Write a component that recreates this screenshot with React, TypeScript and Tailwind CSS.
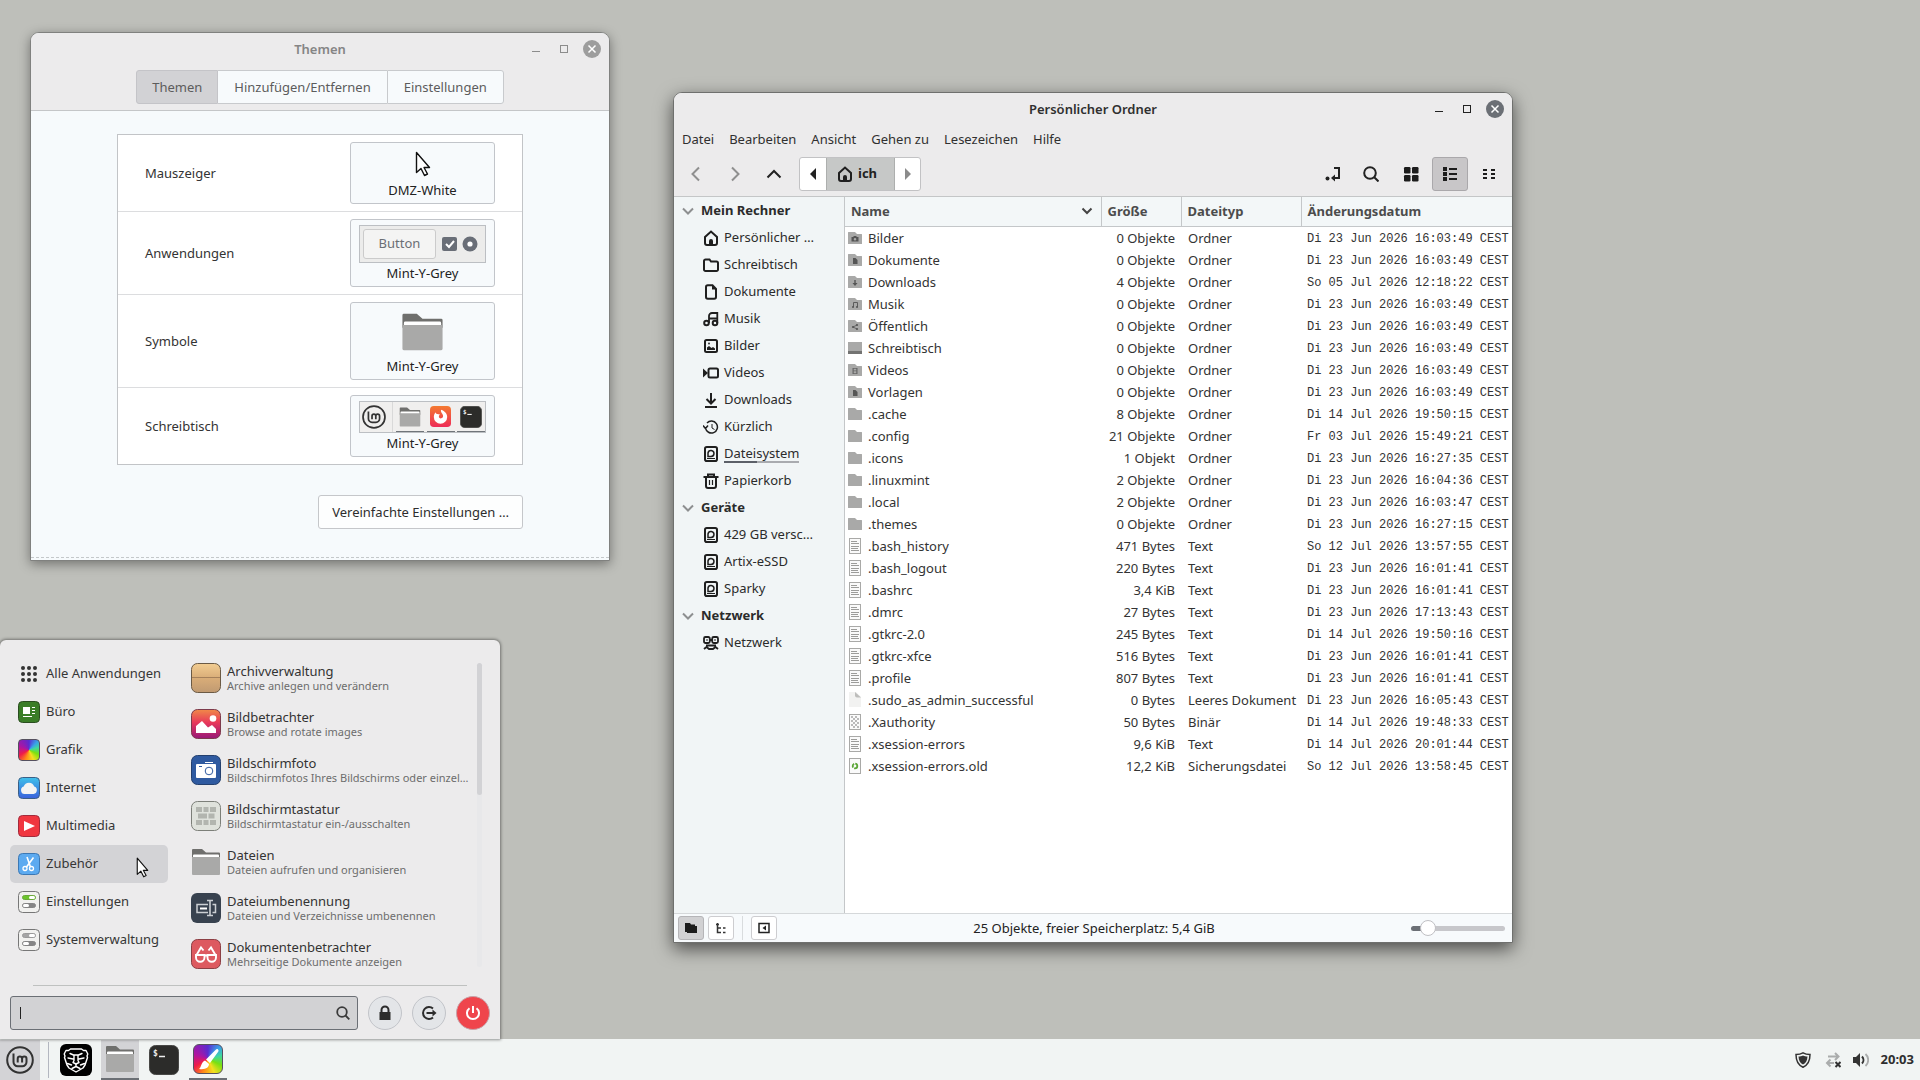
import type { ReactNode } from "react";

type IconProps = { className?: string };

interface FileEntry {
  name: string;
  icon: string;
  size: string;
  type: string;
  date: string;
}

const folderDate = "Di 23 Jun 2026 16:03:49 CEST";

const files: FileEntry[] = [
  { name: "Bilder", icon: "camera", size: "0 Objekte", type: "Ordner", date: folderDate },
  { name: "Dokumente", icon: "doc", size: "0 Objekte", type: "Ordner", date: folderDate },
  { name: "Downloads", icon: "down", size: "4 Objekte", type: "Ordner", date: "So 05 Jul 2026 12:18:22 CEST" },
  { name: "Musik", icon: "music", size: "0 Objekte", type: "Ordner", date: folderDate },
  { name: "Öffentlich", icon: "share", size: "0 Objekte", type: "Ordner", date: folderDate },
  { name: "Schreibtisch", icon: "desktop", size: "0 Objekte", type: "Ordner", date: folderDate },
  { name: "Videos", icon: "film", size: "0 Objekte", type: "Ordner", date: folderDate },
  { name: "Vorlagen", icon: "doc", size: "0 Objekte", type: "Ordner", date: folderDate },
  { name: ".cache", icon: "folder", size: "8 Objekte", type: "Ordner", date: "Di 14 Jul 2026 19:50:15 CEST" },
  { name: ".config", icon: "folder", size: "21 Objekte", type: "Ordner", date: "Fr 03 Jul 2026 15:49:21 CEST" },
  { name: ".icons", icon: "folder", size: "1 Objekt", type: "Ordner", date: "Di 23 Jun 2026 16:27:35 CEST" },
  { name: ".linuxmint", icon: "folder", size: "2 Objekte", type: "Ordner", date: "Di 23 Jun 2026 16:04:36 CEST" },
  { name: ".local", icon: "folder", size: "2 Objekte", type: "Ordner", date: "Di 23 Jun 2026 16:03:47 CEST" },
  { name: ".themes", icon: "folder", size: "0 Objekte", type: "Ordner", date: "Di 23 Jun 2026 16:27:15 CEST" },
  { name: ".bash_history", icon: "text", size: "471 Bytes", type: "Text", date: "So 12 Jul 2026 13:57:55 CEST" },
  { name: ".bash_logout", icon: "text", size: "220 Bytes", type: "Text", date: "Di 23 Jun 2026 16:01:41 CEST" },
  { name: ".bashrc", icon: "text", size: "3,4 KiB", type: "Text", date: "Di 23 Jun 2026 16:01:41 CEST" },
  { name: ".dmrc", icon: "text", size: "27 Bytes", type: "Text", date: "Di 23 Jun 2026 17:13:43 CEST" },
  { name: ".gtkrc-2.0", icon: "text", size: "245 Bytes", type: "Text", date: "Di 14 Jul 2026 19:50:16 CEST" },
  { name: ".gtkrc-xfce", icon: "text", size: "516 Bytes", type: "Text", date: "Di 23 Jun 2026 16:01:41 CEST" },
  { name: ".profile", icon: "text", size: "807 Bytes", type: "Text", date: "Di 23 Jun 2026 16:01:41 CEST" },
  { name: ".sudo_as_admin_successful", icon: "empty", size: "0 Bytes", type: "Leeres Dokument", date: "Di 23 Jun 2026 16:05:43 CEST" },
  { name: ".Xauthority", icon: "binary", size: "50 Bytes", type: "Binär", date: "Di 14 Jul 2026 19:48:33 CEST" },
  { name: ".xsession-errors", icon: "text", size: "9,6 KiB", type: "Text", date: "Di 14 Jul 2026 20:01:44 CEST" },
  { name: ".xsession-errors.old", icon: "backup", size: "12,2 KiB", type: "Sicherungsdatei", date: "So 12 Jul 2026 13:58:45 CEST" },
];

const places = [
  {
    title: "Mein Rechner",
    items: [
      { label: "Persönlicher …", icon: "home" },
      { label: "Schreibtisch", icon: "folder" },
      { label: "Dokumente", icon: "document" },
      { label: "Musik", icon: "music" },
      { label: "Bilder", icon: "image" },
      { label: "Videos", icon: "video" },
      { label: "Downloads", icon: "download" },
      { label: "Kürzlich", icon: "recent" },
      { label: "Dateisystem", icon: "disk", usage: true },
      { label: "Papierkorb", icon: "trash" },
    ],
  },
  {
    title: "Geräte",
    items: [
      { label: "429 GB versc…", icon: "disk" },
      { label: "Artix-eSSD", icon: "disk" },
      { label: "Sparky", icon: "disk" },
    ],
  },
  { title: "Netzwerk", items: [{ label: "Netzwerk", icon: "network" }] },
];

const categories = [
  { label: "Alle Anwendungen", icon: <GridDots /> },
  { label: "Büro", icon: <OfficeIcon /> },
  { label: "Grafik", icon: <RainbowTile className="size-[22px] rounded-[4px]" /> },
  { label: "Internet", icon: <CloudIcon /> },
  { label: "Multimedia", icon: <PlayIcon /> },
  { label: "Zubehör", icon: <ScissorsIcon />, active: true },
  { label: "Einstellungen", icon: <TogglesIcon green /> },
  { label: "Systemverwaltung", icon: <TogglesIcon /> },
];

const apps = [
  { name: "Archivverwaltung", info: "Archive anlegen und verändern", icon: <ArchiveIcon /> },
  { name: "Bildbetrachter", info: "Browse and rotate images", icon: <ViewerIcon /> },
  { name: "Bildschirmfoto", info: "Bildschirmfotos Ihres Bildschirms oder einzel…", icon: <CameraIcon /> },
  { name: "Bildschirmtastatur", info: "Bildschirmtastatur ein-/ausschalten", icon: <KeyboardIcon /> },
  { name: "Dateien", info: "Dateien aufrufen und organisieren", icon: <BigFolder className="size-[30px]" /> },
  { name: "Dateiumbenennung", info: "Dateien und Verzeichnisse umbenennen", icon: <RenameIcon /> },
  { name: "Dokumentenbetrachter", info: "Mehrseitige Dokumente anzeigen", icon: <GlassesIcon /> },
];

/* ---------- icons ---------- */

function GridDots() {
  return (
    <svg viewBox="0 0 22 22" className="size-[22px] shrink-0" fill="#333">
      {[5, 11, 17].map((y) => [5, 11, 17].map((x) => <circle key={`${x}-${y}`} cx={x} cy={y} r="2" />))}
    </svg>
  );
}

function OfficeIcon() {
  return (
    <svg viewBox="0 0 22 22" className="size-[22px]">
      <rect x=".5" y=".5" width="21" height="21" rx="4" fill="#3a7d27" stroke="#2a4d20" />
      <path d="M5 6h7v7H5zM14 6h3v1h-3zM14 9h3v1h-3zM14 12h3v1h-3zM5 15h9v1H5z" fill="#fff" />
    </svg>
  );
}

function RainbowTile({ className, children }: IconProps & { children?: ReactNode }) {
  return (
    <span
      className={`block border border-[#55505f] bg-[conic-gradient(from_0deg,#5a2bd0,#3aa0e8_45deg,#3fd8a0_75deg,#7be010_115deg,#f4e020_155deg,#ff8a18_200deg,#f01c48_240deg,#b014a0_290deg,#5a2bd0)] ${className}`}
    >
      {children}
    </span>
  );
}

function CloudIcon() {
  return (
    <svg viewBox="0 0 22 22" className="size-[22px]">
      <defs>
        <linearGradient id="sky" x2="0" y2="1">
          <stop stopColor="#3fc0ea" />
          <stop offset="1" stopColor="#3a62dc" />
        </linearGradient>
      </defs>
      <rect x=".5" y=".5" width="21" height="21" rx="4" fill="url(#sky)" stroke="#3b5f86" />
      <path d="M6.500 17a3.800 3.800 0 0 1-.8-7.400A5.500 5.500 0 0 1 16.200 9.600 3.800 3.800 0 0 1 15.500 17z" fill="#f3f3f3" />
    </svg>
  );
}

function PlayIcon() {
  return (
    <svg viewBox="0 0 22 22" className="size-[22px]">
      <rect x=".5" y=".5" width="21" height="21" rx="4" fill="#f03640" stroke="#a12b3c" />
      <path d="M6 6l11 5-11 5z" fill="#fff" />
    </svg>
  );
}

function ScissorsIcon() {
  return (
    <svg viewBox="0 0 22 22" className="size-[22px]">
      <rect x=".5" y=".5" width="21" height="21" rx="4" fill="#5caaf0" stroke="#3c78b4" />
      <path d="M9 4l3.500 10M15.500 4.500L8.500 14" stroke="#fff" strokeWidth="1.600" fill="none" />
      <circle cx="7" cy="15.500" r="2" fill="none" stroke="#fff" strokeWidth="1.300" />
      <circle cx="13.500" cy="15.500" r="2" fill="none" stroke="#fff" strokeWidth="1.300" />
    </svg>
  );
}

function TogglesIcon({ green }: { green?: boolean }) {
  return (
    <svg viewBox="0 0 22 22" className="size-[22px]">
      <rect x=".5" y=".5" width="21" height="21" rx="4" fill="#f1f1ef" stroke="#777" />
      <rect x="4.500" y="4.500" width="13" height="4" rx="2" fill={green ? "#6cc52c" : "#a5a5a5"} stroke={green ? "#6aa93a" : "#9a9a9a"} />
      <rect x="11" y="5" width="6" height="3" rx="1.500" fill="#fff" />
      <rect x="4.500" y="12.500" width="13" height="4" rx="2" fill="#858585" stroke="#858585" />
      <rect x="5" y="13" width="6" height="3" rx="1.500" fill="#fff" />
    </svg>
  );
}

function ArchiveIcon() {
  return (
    <svg viewBox="0 0 30 30" className="size-[30px]">
      <defs>
        <linearGradient id="box" x2="0" y2="1">
          <stop stopColor="#f2cd92" />
          <stop offset=".5" stopColor="#d9ad78" />
          <stop offset="1" stopColor="#c09a72" />
        </linearGradient>
      </defs>
      <rect x=".5" y=".5" width="29" height="29" rx="6" fill="url(#box)" stroke="#6b5a45" />
      <path d="M1 14.500h28" stroke="#a5805a" />
    </svg>
  );
}

function ViewerIcon() {
  return (
    <svg viewBox="0 0 30 30" className="size-[30px]">
      <defs>
        <linearGradient id="sunset" x2="0" y2="1">
          <stop stopColor="#f08a48" />
          <stop offset=".45" stopColor="#e8385a" />
          <stop offset="1" stopColor="#981878" />
        </linearGradient>
      </defs>
      <rect x=".5" y=".5" width="29" height="29" rx="6" fill="url(#sunset)" stroke="#7d3b4c" />
      <circle cx="22" cy="9.500" r="3.300" fill="#fff" />
      <path d="M5 24v-7l6-5 6 6.500 4-2.500 4 4v4z" fill="#fff" />
    </svg>
  );
}

function CameraIcon() {
  return (
    <svg viewBox="0 0 30 30" className="size-[30px]">
      <rect x=".5" y=".5" width="29" height="29" rx="6" fill="#2f5aa0" stroke="#24406e" />
      <path d="M14 7h8v1h-8zM6 9h18a1 1 0 0 1 1 1v12a1 1 0 0 1-1 1H6a1 1 0 0 1-1-1V10a1 1 0 0 1 1-1z" fill="#fff" />
      <path d="M8 11.500h3" stroke="#2f5aa0" />
      <circle cx="18" cy="16" r="3.800" fill="#fff" stroke="#2f5aa0" />
    </svg>
  );
}

function KeyboardIcon() {
  return (
    <svg viewBox="0 0 30 30" className="size-[30px]">
      <rect x=".5" y=".5" width="29" height="29" rx="6" fill="#dfe2dc" stroke="#7c7f79" />
      <path
        d="M5 6h6v5H5zM12.500 6h5v5h-5zM19 6h6v5h-6zM7 12.500h9v5H7zM17.500 12.500h6v5h-6zM5 19h6v5H5zM12.500 19h5v5h-5zM19 19h6v5h-6z"
        fill="#b2b5af"
      />
    </svg>
  );
}

function BigFolder({ className }: IconProps) {
  return (
    <svg viewBox="0 0 30 30" preserveAspectRatio="none" className={className}>
      <path d="M1 3a1 1 0 0 1 1-1h9l4 3.500h13a1 1 0 0 1 1 1V12H1z" fill="#6f6f6d" />
      <path d="M3 7.500h24a1 1 0 0 1 1 1V12H2V8.500a1 1 0 0 1 1-1z" fill="#fff" />
      <path d="M1 10h28v17a1 1 0 0 1-1 1H2a1 1 0 0 1-1-1z" fill="#a9a9a8" />
    </svg>
  );
}

function RenameIcon() {
  return (
    <svg viewBox="0 0 30 30" className="size-[30px]">
      <rect width="30" height="30" rx="6" fill="#38424f" />
      <path d="M17 11.500H6v8h11M21.500 11.500h3v8h-3" stroke="#ccd0d4" strokeWidth="1.500" fill="none" />
      <path d="M16 7.500h6M16 22.500h6M19 8v14" stroke="#ccd0d4" strokeWidth="1.600" />
      <path d="M9 14.500h7v2H9z" fill="#fff" />
    </svg>
  );
}

function GlassesIcon() {
  return (
    <svg viewBox="0 0 30 30" className="size-[30px]">
      <rect x=".5" y=".5" width="29" height="29" rx="6" fill="#dd5a60" stroke="#8c3f44" />
      <g fill="none" stroke="#fff" strokeWidth="1.900">
        <path d="M5.500 16L10 8.500l2.500 3M24.500 16L20 8.500l-2.500 3M13.500 16.500h3" />
        <path d="M5 16h8.500v2.500a4.200 4.200 0 0 1-8.500 0zM16.500 16H25v2.500a4.200 4.200 0 0 1-8.500 0z" />
      </g>
    </svg>
  );
}

function MintLogo({ className }: IconProps) {
  return (
    <svg viewBox="0 0 28 28" className={className} fill="none" stroke="#333" strokeWidth="2">
      <circle cx="14" cy="14" r="12.800" />
      <path d="M7.500 7.500v8.500a4.200 4.200 0 0 0 4.200 4.200h4.600a4.200 4.200 0 0 0 4.200-4.200v-3.200a2.200 2.200 0 0 0-4.400 0V16.500v-3.700a2.200 2.200 0 0 0-4.400 0V16.500" />
    </svg>
  );
}

function TerminalIcon({ className }: IconProps) {
  return (
    <svg viewBox="0 0 30 30" className={className}>
      <rect x=".5" y=".5" width="29" height="29" rx="6" fill="#2c2c2a" stroke="#484846" />
      <text x="4" y="11" fontFamily="'DejaVu Sans Mono', monospace" fontSize="8" fontWeight="bold" fill="#eee">
        $
      </text>
      <path d="M10 11.500h6" stroke="#eee" strokeWidth="1.500" />
    </svg>
  );
}

function FirefoxIcon() {
  return (
    <svg viewBox="0 0 22 22" className="size-[21px]">
      <defs>
        <linearGradient id="fox" x2="0" y2="1">
          <stop stopColor="#f47a30" />
          <stop offset="1" stopColor="#ee2c58" />
        </linearGradient>
      </defs>
      <rect width="22" height="22" rx="4" fill="url(#fox)" />
      <path
        d="M6 6.500c0 1 .5 1.600 1.500 1.800L10.500 9c-1.300 1-1.500 2.200-.8 3.200 1.400 1.600 4 .6 4-1.600C13.700 8 11 7.500 11.500 4c4.500 1.500 6.500 4.500 6.500 7.500a7 7 0 0 1-14 0c0-2 .8-3.800 2-5z"
        fill="#fff"
      />
    </svg>
  );
}

function BraveIcon() {
  return (
    <svg viewBox="0 0 32 32" className="size-8">
      <rect width="32" height="32" rx="6" fill="#000" />
      <g fill="none" stroke="#fff" strokeWidth="1.400" strokeLinejoin="round" strokeLinecap="round">
        <path d="M10.500 5h11l2 1.500h2.500l1.800 3.500-.8 2 .5 1.500-2.500 7.500-2 3L16 28l-7-4-2-3-2.500-7.500L5 12l-.8-2L6 6.500h2.500z" />
        <path d="M10 9.500l3.500 1.500h5L22 9.500M8 14l5 1M24 14l-5 1M14 11v5.500l-1 2 3 1.500 3-1.500-1-2V11" />
        <path d="M16 20v2.500M12 24.500l4-2 4 2M7.500 19.500l4 1.500M24.500 19.500l-4 1.500" />
      </g>
    </svg>
  );
}

function Pointer({ className }: IconProps) {
  return (
    <svg viewBox="0 0 16 26" className={className}>
      <path d="M1.500 1.500v20l4.500-4 3.500 7 3-1.500L9 16.500h5.500z" fill="#fff" stroke="#111" strokeWidth="1.400" strokeLinejoin="round" />
    </svg>
  );
}

function PlaceIcon({ name }: { name: string }) {
  const shapes: Record<string, ReactNode> = {
    home: (
      <>
        <path d="M2 7L8 1.500 14 7v6a2 2 0 0 1-2 2H4a2 2 0 0 1-2-2z" />
        <path d="M6 15v-4a2 2 0 0 1 4 0v4z" fill="#1f1f1f" stroke="none" />
      </>
    ),
    folder: <path d="M1 4a1.500 1.500 0 0 1 1.500-1.500h4L8 4.500h5.500A1.500 1.500 0 0 1 15 6v6.500a1.500 1.500 0 0 1-1.500 1.500h-11A1.500 1.500 0 0 1 1 12.500z" />,
    document: (
      <>
        <path d="M3 3a1.800 1.800 0 0 1 1.800-1.800H9.500L13 5v8a1.800 1.800 0 0 1-1.800 1.800H4.800A1.800 1.800 0 0 1 3 13z" />
        <path d="M9 1v4.500h4.500z" fill="#1f1f1f" stroke="none" />
      </>
    ),
    music: (
      <>
        <circle cx="3.500" cy="12" r="2.300" />
        <circle cx="12" cy="12" r="2.300" />
        <path d="M6 12V5a3 3 0 0 1 3-3h5.300v10M6 7.500h8" strokeWidth="1.800" />
      </>
    ),
    image: (
      <>
        <rect x="2" y="2" width="12" height="12" rx="1.500" />
        <path d="M4 12V9.500l2-1.500 2.500 2 1.500-1 2 1.500V12z" fill="#1f1f1f" stroke="none" />
        <circle cx="6" cy="5.500" r=".9" fill="#1f1f1f" stroke="none" />
      </>
    ),
    video: (
      <>
        <rect x="5.500" y="3.500" width="9.500" height="9" rx="1.500" />
        <path d="M0 3.500L5 8l-5 4.500z" fill="#1f1f1f" stroke="none" />
      </>
    ),
    download: <path d="M8 1v10M3.500 7L8 11.500 12.500 7M2 15h12" />,
    recent: (
      <g strokeWidth="1.500">
        <path d="M2.500 9A6 6 0 1 0 4 4M0 6.500L2.500 9.500 5 6.500" />
        <path d="M9 5v4l2.500 1.500" strokeWidth="1" />
      </g>
    ),
    disk: (
      <>
        <rect x="2" y="1" width="12" height="14" rx="1.800" />
        <path d="M5 10.500V7a3 3 0 1 1 3 3.500z" strokeWidth="1.500" />
        <path d="M4 12.500h8" strokeWidth="1" />
      </>
    ),
    trash: (
      <>
        <path d="M3 4.500V13a2 2 0 0 0 2 2h6a2 2 0 0 0 2-2V4.500M.5 4h15M5 4V1.500h6V4" />
        <path d="M6.500 7v5M9.500 7v5" strokeWidth="1.200" />
      </>
    ),
    network: (
      <g strokeWidth="1.800">
        <rect x="1" y="2" width="5.800" height="6" rx="1.500" />
        <rect x="9.200" y="2" width="5.800" height="6" rx="1.500" />
        <path d="M6.500 5h3M3.500 5h1M11.500 5h1M3 10.500h10M1 14l2.500-2 2.500 2h4l2.500-2 2.500 2" />
      </g>
    ),
  };
  return (
    <svg viewBox="0 0 16 16" className="size-4 shrink-0" fill="none" stroke="#1f1f1f" strokeWidth="2">
      {shapes[name]}
    </svg>
  );
}

function FileIcon({ name }: { name: string }) {
  if (name === "text" || name === "binary" || name === "backup" || name === "empty") {
    return (
      <svg viewBox="0 0 14 16" className="h-4 w-3.5 shrink-0" fill="none">
        {name === "empty" ? (
          <>
            <path d="M1 0h7l5 5v10H1z" fill="#f2f2f1" />
            <path d="M7 0l6 5.500H9a2 2 0 0 1-2-2z" fill="#bdbdbb" />
          </>
        ) : (
          <rect x="1.500" y=".5" width="11" height="15" fill="#fafafa" stroke="#a9a9a7" />
        )}
        {name === "text" && <path d="M3 3.500h6M3 5.500h8M3 8.500h8M3 10.500h7M3 12.500h8" stroke="#9c9c9a" />}
        {name === "binary" && (
          <path d="M3 3h8M3 7h8M3 11h8M5 5h6M5 9h6M5 13h6" stroke="#bababa" strokeWidth="2" strokeDasharray="2 2" />
        )}
        {name === "backup" && <circle cx="7" cy="8" r="2.300" stroke="#5ba637" strokeWidth="1.800" strokeDasharray="4 1" />}
      </svg>
    );
  }
  return (
    <svg viewBox="0 0 14 14" className="size-3.5 shrink-0">
      {name === "desktop" ? (
        <>
          <path d="M0 1h14v9H0z" fill="#a9a9a8" />
          <path d="M0 10h14v3H0z" fill="#737372" />
        </>
      ) : (
        <path d="M0 1.500A.5.5 0 0 1 .5 1H7l2 2h4.500a.5.5 0 0 1 .5.500V12.500a.5.5 0 0 1-.5.500H.5a.5.5 0 0 1-.5-.500z" fill="#a9a9a8" />
      )}
      <g fill="#555">
        {name === "camera" && (
          <path d="M3.500 6h1.500l1-1h2l1 1h1.500v4.500h-7zM7 7a1.300 1.300 0 1 0 0 2.600A1.300 1.300 0 0 0 7 7z" fillRule="evenodd" />
        )}
        {name === "doc" && <path d="M5 5h2.500L9.500 7v4H5z" />}
        {name === "down" && <path d="M6.300 5h1.400v3H9.500L7 11 4.500 8h1.800z" />}
        {name === "music" && (
          <>
            <path d="M5.500 10V5.500h4V10" fill="none" stroke="#555" strokeWidth=".9" />
            <circle cx="5" cy="10" r="1" />
            <circle cx="9" cy="10" r="1" />
          </>
        )}
        {name === "share" && (
          <>
            <circle cx="5" cy="8" r="1.100" />
            <circle cx="9" cy="6" r="1.100" />
            <circle cx="9" cy="10" r="1.100" />
            <path d="M9 6L5 8l4 2" fill="none" stroke="#555" strokeWidth=".8" />
          </>
        )}
        {name === "film" && <path d="M4.500 5h1.200v6H4.500zM8.300 5h1.200v6H8.300zM5 5h4v.8H5zM5 7.500h4v.8H5zM5 10.200h4v.8H5z" opacity=".8" />}
      </g>
    </svg>
  );
}

/* ---------- windows ---------- */

function WindowTitle({ title, active }: { title: string; active?: boolean }) {
  const tone = active ? "#222" : "#8c8c8c";
  return (
    <div className="grid h-8 grid-cols-[1fr_auto_1fr] items-center">
      <span />
      <h2 className={`pt-0.5 text-[13px] font-semibold ${active ? "text-[#303030]" : "text-[#858585]"}`}>{title}</h2>
      <div className="flex items-center justify-end gap-2.5 pr-2">
        <button aria-label="Minimieren" className="size-[18px]">
          <svg viewBox="0 0 18 18" stroke={tone}>
            <path d="M5 11.500h8" />
          </svg>
        </button>
        <button aria-label="Maximieren" className="size-[18px]">
          <svg viewBox="0 0 18 18" stroke={tone} fill="none">
            <rect x="5.500" y="5.500" width="7" height="7" />
          </svg>
        </button>
        <button aria-label="Schließen" className="size-[18px]">
          <svg viewBox="0 0 18 18">
            <circle cx="9" cy="9" r="9" fill={active ? "#6b6f75" : "#9d9d9d"} />
            <path d="M5.500 5.500l7 7M12.500 5.500l-7 7" stroke="#fff" strokeWidth="1.500" />
          </svg>
        </button>
      </div>
    </div>
  );
}

function ThemeRow({ label, value, children }: { label: string; value: string; children: ReactNode }) {
  return (
    <div className="flex items-center justify-between px-[27px] py-[7px]">
      <span className="pt-0.5 text-[13px] text-[#333]">{label}</span>
      <button
        aria-label={`${label}: ${value}`}
        className="flex w-[145px] flex-col items-center rounded-[3px] border border-[#c2c5ca] bg-[#f7fafc] pt-[5px] pb-[3px]"
      >
        {children}
        <span className="text-[13px] leading-5 text-[#222]">{value}</span>
      </button>
    </div>
  );
}

function ThemesWindow() {
  return (
    <section className="absolute top-8 left-[30px] w-[580px] overflow-hidden rounded-t-[9px] border border-[#80817f] bg-[#f6fafc] shadow-[0_3px_12px_rgba(0,0,0,0.4)]">
      <header className="border-b border-[#c4c6c8] bg-[#ecebec] pb-1.5">
        <WindowTitle title="Themen" />
        <div role="tablist" className="mt-[5px] flex justify-center text-[13px] text-[#5c5c5c]">
          <button role="tab" aria-selected="true" className="h-[34px] rounded-l-[3px] border border-[#c4c4c8] bg-[#d2d2d5] px-[15px] pt-0.5">
            Themen
          </button>
          <button role="tab" aria-selected="false" className="h-[34px] border-y border-[#c8cacd] bg-[#f7fafc] px-4 pt-0.5">
            Hinzufügen/Entfernen
          </button>
          <button role="tab" aria-selected="false" className="h-[34px] rounded-r-[3px] border border-[#c8cacd] bg-[#f7fafc] px-4 pt-0.5">
            Einstellungen
          </button>
        </div>
      </header>
      <div className="mx-[86px] mt-[23px] divide-y divide-[#dcdddf] border border-[#c2c4c7] bg-white">
        <ThemeRow label="Mauszeiger" value="DMZ-White">
          <Pointer className="my-[3px] h-[26px] w-4" />
        </ThemeRow>
        <ThemeRow label="Anwendungen" value="Mint-Y-Grey">
          <span className="flex h-[38px] w-[127px] items-center border border-[#bcbfc3] bg-[#ececeb] pl-[3px]">
            <span className="mr-1.5 flex h-[30px] w-[73px] items-center justify-center rounded-[3px] border border-[#cbcbcb] bg-[#f4f4f3] text-[13px] text-[#6b6f75]">
              Button
            </span>
            <svg viewBox="0 0 36 16" className="h-4 w-9">
              <rect x="0" y="1" width="15" height="14" rx="2" fill="#696e77" />
              <path d="M4 8l3 3 5-6" stroke="#fff" strokeWidth="2" fill="none" />
              <circle cx="28" cy="8" r="7.500" fill="#696e77" />
              <circle cx="28" cy="8" r="2.600" fill="#fff" />
            </svg>
          </span>
        </ThemeRow>
        <ThemeRow label="Symbole" value="Mint-Y-Grey">
          <BigFolder className="my-[3px] h-[42px] w-[43px]" />
        </ThemeRow>
        <ThemeRow label="Schreibtisch" value="Mint-Y-Grey">
          <span className="flex h-8 w-[127px] items-center border border-[#bcbfc3] bg-[#f0efee] pl-0.5">
            <MintLogo className="size-6" />
            <span className="mr-[3px] ml-1.5 h-full w-px bg-[#d9d9d9]" />
            <span className="flex h-full flex-1 justify-between">
              <span className="flex h-full w-7 items-center justify-center border-b border-[#70757a]">
                <BigFolder className="size-[22px]" />
              </span>
              <span className="flex h-full w-7 items-center justify-center border-b border-[#70757a]">
                <FirefoxIcon />
              </span>
              <span className="flex h-full w-7 items-center justify-center border-b border-[#70757a]">
                <TerminalIcon className="size-[22px]" />
              </span>
            </span>
          </span>
        </ThemeRow>
      </div>
      <div className="mx-[86px] mt-[30px] mb-7 flex justify-end">
        <button className="h-[34px] rounded-[3px] border border-[#c5c7ca] bg-[#fdfefe] px-[13px] pt-0.5 text-[13px] text-[#2d2d2d]">
          Vereinfachte Einstellungen …
        </button>
      </div>
      <div className="mb-0.5 border-t border-dashed border-[#c4c8ca]" />
    </section>
  );
}

function Toolbar() {
  return (
    <div className="flex h-[43px] items-start px-[3px] pt-1">
      <button aria-label="Zurück" className="flex h-[34px] w-[38px] items-center justify-center">
        <svg viewBox="0 0 16 16" className="size-4" fill="none" stroke="#8f8f8f" strokeWidth="2">
          <path d="M11 1.500L4.500 8l6.500 6.500" />
        </svg>
      </button>
      <button aria-label="Vorwärts" className="ml-px flex h-[34px] w-[38px] items-center justify-center">
        <svg viewBox="0 0 16 16" className="size-4" fill="none" stroke="#8f8f8f" strokeWidth="2">
          <path d="M5 1.500L11.500 8 5 14.500" />
        </svg>
      </button>
      <button aria-label="Übergeordneter Ordner" className="ml-px flex h-[34px] w-[38px] items-center justify-center">
        <svg viewBox="0 0 16 16" className="size-4" fill="none" stroke="#222" strokeWidth="2">
          <path d="M1.500 11.500L8 5l6.500 6.500" />
        </svg>
      </button>
      <div className="ml-1.5 flex h-[34px] overflow-hidden rounded-[3px] border border-[#c2c2c4] bg-white">
        <button aria-label="Pfad nach links" className="flex w-[26px] items-center justify-center">
          <svg viewBox="0 0 8 12" className="h-3 w-2" fill="#222">
            <path d="M7 0v12L1 6z" />
          </svg>
        </button>
        <button className="flex w-[69px] items-center gap-[5px] border-x border-[#adafae] bg-[#c6c8c7] pl-2.5 text-[13px] font-bold text-[#222]">
          <PlaceIcon name="home" />
          ich
        </button>
        <button aria-label="Pfad nach rechts" className="flex w-[25px] items-center justify-center">
          <svg viewBox="0 0 8 12" className="h-3 w-2" fill="#8b8b8b">
            <path d="M1 0v12l6-6z" />
          </svg>
        </button>
      </div>
      <div className="ml-auto flex gap-0.5 pr-px">
        <button aria-label="Ort eingeben" className="flex h-[34px] w-9 items-center justify-center">
          <svg viewBox="0 0 16 16" className="size-4" fill="none" stroke="#222" strokeWidth="2">
            <path d="M9 2h5v10H8" />
            <circle cx="2.500" cy="12.500" r="2" fill="#222" stroke="none" />
            <path d="M10 8.500L6 12l4 3.500z" fill="#222" stroke="none" />
          </svg>
        </button>
        <button aria-label="Suchen" className="flex h-[34px] w-9 items-center justify-center">
          <svg viewBox="0 0 16 16" className="size-4" fill="none" stroke="#222" strokeWidth="2">
            <circle cx="7" cy="7" r="5.800" />
            <path d="M11 11l4.500 4.500" />
          </svg>
        </button>
        <button aria-label="Symbolansicht" className="flex h-[34px] w-[39px] items-center justify-center">
          <svg viewBox="0 0 16 16" className="size-4" fill="#1c1c1c">
            <rect x="1" y="1" width="6.500" height="6.500" rx="1.200" />
            <rect x="9" y="1" width="6.500" height="6.500" rx="1.200" />
            <rect x="1" y="9" width="6.500" height="6.500" rx="1.200" />
            <rect x="9" y="9" width="6.500" height="6.500" rx="1.200" />
          </svg>
        </button>
        <button
          aria-label="Listenansicht"
          aria-pressed="true"
          className="flex h-[34px] w-9 items-center justify-center rounded-[3px] border border-[#aaa8ab] bg-[#c8c6c8]"
        >
          <svg viewBox="0 0 16 16" className="size-4" fill="#1c1c1c">
            <path d="M1 1h4v4H1zM1 6h4v4H1zM1 11h4v4H1zM7 2h8v2H7zM7 7h8v2H7zM7 12h8v2H7z" />
          </svg>
        </button>
        <button aria-label="Kompaktansicht" className="flex h-[34px] w-[38px] items-center justify-center">
          <svg viewBox="0 0 16 16" className="size-4" fill="#1c1c1c">
            <path d="M2 3h4v2H2zM10 3h4v2h-4zM2 7h4v2H2zM10 7h4v2h-4zM2 11h4v2H2zM10 11h4v2h-4z" />
          </svg>
        </button>
      </div>
    </div>
  );
}

function Sidebar() {
  return (
    <nav className="w-[170px] shrink-0 bg-[#f1f5f6] text-[13px] text-[#2b2b2b]">
      {places.map((group) => (
        <div key={group.title}>
          <button className="flex h-[27px] w-full items-center gap-[7px] pl-2 font-bold">
            <svg viewBox="0 0 12 12" className="size-3" fill="none" stroke="#8d8f90" strokeWidth="2">
              <path d="M1 3.500L6 8.500l5-5" />
            </svg>
            {group.title}
          </button>
          {group.items.map((item) => (
            <a key={item.label} href="#" className="flex h-[27px] items-center gap-[5px] pl-[29px] whitespace-nowrap">
              <PlaceIcon name={item.icon} />
              {"usage" in item ? (
                <span className="border-b-2 border-[#9a9ca0] leading-4 [border-image:linear-gradient(to_right,#5c6068_44%,#a9abaf_44%)_1]">
                  {item.label}
                </span>
              ) : (
                item.label
              )}
            </a>
          ))}
        </div>
      ))}
    </nav>
  );
}

function FileTable() {
  return (
    <table className="w-full table-fixed border-collapse text-left text-[13px] whitespace-nowrap text-[#333]">
      <colgroup>
        <col />
        <col className="w-20" />
        <col className="w-[120px]" />
        <col className="w-[211px]" />
      </colgroup>
      <thead>
        <tr className="h-[29px] border-b border-[#c4c7c9] bg-[#f3f7f8] text-[#4c4c4c]">
          <th className="p-0 pl-1.5">
            <span className="flex items-center justify-between pr-2">
              Name
              <svg viewBox="0 0 12 12" className="size-3" fill="none" stroke="#444" strokeWidth="2">
                <path d="M1.500 3.500L6 8l4.500-4.500" />
              </svg>
            </span>
          </th>
          <th className="border-l border-[#c4c7c9] p-0 pl-1.5">Größe</th>
          <th className="border-l border-[#c4c7c9] p-0 pl-1.5">Dateityp</th>
          <th className="border-l border-[#c4c7c9] p-0 pl-1.5">Änderungsdatum</th>
        </tr>
      </thead>
      <tbody>
        {files.map((file) => (
          <tr key={file.name} className="h-[22px]">
            <td className="p-0 pl-[3px]">
              <span className="flex items-center gap-1.5 leading-5">
                <FileIcon name={file.icon} />
                {file.name}
              </span>
            </td>
            <td className="p-0 pr-1.5 text-right leading-5">{file.size}</td>
            <td className="p-0 pl-[7px] leading-5">{file.type}</td>
            <td className="p-0 pt-0.5 pl-1.5 font-['Liberation_Mono','DejaVu_Sans_Mono',monospace] text-[12px] leading-5">{file.date}</td>
          </tr>
        ))}
      </tbody>
    </table>
  );
}

function StatusBar() {
  return (
    <footer className="flex h-[29px] items-center border-t border-[#d5d8da] bg-[#f7fafc] px-1 text-[13px] text-[#222]">
      <button aria-label="Orte anzeigen" className="flex h-6 w-[26px] items-center justify-center rounded-[3px] border border-[#b5b5b8] bg-[#d1d1d3]">
        <svg viewBox="0 0 12 12" className="size-3" fill="#1c1c1c">
          <path d="M0 1h5l1 1.500h4V4H2.500v6H0z" />
          <path d="M2 4h10v7H2z" />
        </svg>
      </button>
      <button aria-label="Baumansicht" className="ml-1 flex h-6 w-[26px] items-center justify-center rounded-[3px] border border-[#cdcdd0] bg-white">
        <svg viewBox="0 0 12 12" className="size-3" fill="none" stroke="#333" strokeWidth="1.500">
          <path d="M2.500 1v9.500H6M1 2.500h3M2.500 6H6M8 6h2.500M8 10.500h2.500" />
        </svg>
      </button>
      <span className="mx-2 h-6 w-px bg-[#d9dcde]" />
      <button aria-label="Seitenleiste ausblenden" className="flex h-6 w-[26px] items-center justify-center rounded-[3px] border border-[#cdcdd0] bg-white">
        <svg viewBox="0 0 12 12" className="size-3" fill="none" stroke="#222" strokeWidth="1.500">
          <rect x="1" y="1.500" width="10" height="9" />
          <path d="M8 3.500v5L4.500 6z" fill="#222" stroke="none" />
        </svg>
      </button>
      <p className="flex-1 pt-0.5 text-center">25 Objekte, freier Speicherplatz: 5,4 GiB</p>
      <input
        type="range"
        aria-label="Vergrößerung"
        defaultValue={12}
        className="mr-[3px] h-4 w-[94px] appearance-none bg-transparent [&::-webkit-slider-runnable-track]:h-[5px] [&::-webkit-slider-runnable-track]:rounded-full [&::-webkit-slider-runnable-track]:bg-[linear-gradient(to_right,#6b6f75_14%,#c7c7cb_14%)] [&::-webkit-slider-thumb]:-mt-[6px] [&::-webkit-slider-thumb]:size-4 [&::-webkit-slider-thumb]:appearance-none [&::-webkit-slider-thumb]:rounded-full [&::-webkit-slider-thumb]:border [&::-webkit-slider-thumb]:border-[#c0c0c4] [&::-webkit-slider-thumb]:bg-white"
      />
    </footer>
  );
}

function FileManager() {
  return (
    <section className="absolute top-[92px] left-[673px] w-[840px] overflow-hidden rounded-t-[9px] border border-[#6f706e] bg-white shadow-[0_6px_18px_rgba(0,0,0,0.6)]">
      <header className="border-b border-[#c4c6c7] bg-[#ecebec]">
        <WindowTitle title="Persönlicher Ordner" active />
        <div role="menubar" className="flex h-7 items-center gap-[15px] px-2 pt-0.5 text-[13px] text-[#303030]">
          {["Datei", "Bearbeiten", "Ansicht", "Gehen zu", "Lesezeichen", "Hilfe"].map((item) => (
            <button key={item} role="menuitem">
              {item}
            </button>
          ))}
        </div>
        <Toolbar />
      </header>
      <div className="flex min-h-[716px]">
        <Sidebar />
        <div className="min-w-0 flex-1 border-l border-[#c4c7c9]">
          <FileTable />
        </div>
      </div>
      <StatusBar />
    </section>
  );
}

/* ---------- panel and menu ---------- */

function StartMenu() {
  return (
    <section className="absolute bottom-0 left-0 w-[500px] rounded-t-[6px] bg-[#ecebec] px-2.5 pt-[15px] pb-[9px] shadow-[0_0_3px_1px_rgba(0,0,0,0.4)]">
      <div className="flex">
        <div className="w-[158px] shrink-0">
          {categories.map((category) => (
            <button
              key={category.label}
              className={`flex h-[38px] w-full items-center gap-1.5 rounded-[5px] pl-2 text-[13px] whitespace-nowrap text-[#363636] ${
                category.active ? "bg-[#d3d3d6]" : ""
              }`}
            >
              {category.icon}
              {category.label}
            </button>
          ))}
        </div>
        <ul className="ml-[23px] flex-1">
          {apps.map((app) => (
            <li key={app.name} className="h-[46px]">
              <button className="flex h-[46px] w-full items-center gap-1.5 text-left whitespace-nowrap">
                {app.icon}
                <span>
                  <span className="block text-[13px] leading-4 text-[#333]">{app.name}</span>
                  <span className="block text-[11px] leading-[14px] text-[#6d6d6d]">{app.info}</span>
                </span>
              </button>
            </li>
          ))}
        </ul>
        <div className="mt-2 mr-2 h-[304px] w-[5px] rounded-full bg-[#e8e8ea]">
          <div className="h-[132px] rounded-full bg-[#d2d2d5]" />
        </div>
      </div>
      <hr className="mx-[23px] mt-2 mb-2.5 border-[#bfc1c0]" />
      <div className="flex items-center gap-2.5">
        <label className="flex h-[34px] flex-1 items-center rounded-[3px] border border-[#6b6f75] bg-[#d2d2d4] pr-[7px] pl-[9px]">
          <span className="mr-px h-3 w-px bg-[#222]" />
          <input type="text" aria-label="Suchen" className="min-w-0 flex-1 bg-transparent text-[13px] outline-none" />
          <svg viewBox="0 0 14 14" className="size-3.5" fill="none" stroke="#3a3a3a" strokeWidth="1.800">
            <circle cx="6" cy="6" r="4.800" />
            <path d="M9.500 9.500l3.800 3.800" />
          </svg>
        </label>
        <button aria-label="Bildschirm sperren" className="flex size-[34px] items-center justify-center rounded-full border border-[#c2c4c9] bg-[#e3e5e8]">
          <svg viewBox="0 0 16 16" className="size-4" fill="#2c2c2c">
            <path d="M2.500 7h11v8h-11z" />
            <path d="M4.500 8V5a3.500 3.500 0 0 1 7 0v3" fill="none" stroke="#2c2c2c" strokeWidth="2" />
          </svg>
        </button>
        <button aria-label="Abmelden" className="flex size-[34px] items-center justify-center rounded-full border border-[#c2c4c9] bg-[#e3e5e8]">
          <svg viewBox="0 0 16 16" className="size-4" fill="none" stroke="#2c2c2c" strokeWidth="2">
            <path d="M12 3.500A6 6 0 1 0 12 12.500M5.500 8H12" />
            <path d="M11.500 4.500v7L15.500 8z" fill="#2c2c2c" stroke="none" />
          </svg>
        </button>
        <button aria-label="Herunterfahren" className="flex size-[34px] items-center justify-center rounded-full border border-[#c9a2a8] bg-[#ef454c]">
          <svg viewBox="0 0 16 16" className="size-4" fill="none" stroke="#fff" strokeWidth="2">
            <path d="M4.500 3.200a6 6 0 1 0 7 0M8 1v7" />
          </svg>
        </button>
      </div>
    </section>
  );
}

function Taskbar() {
  return (
    <footer className="flex h-[41px] shrink-0 items-center bg-[#f1f4f3] pt-px">
      <button aria-label="Menü" className="flex h-10 w-10 items-center justify-center bg-[#d3d3d6]">
        <MintLogo className="size-7" />
      </button>
      <span className="ml-2 h-9 w-px bg-[#b3b7c0]" />
      <button aria-label="Brave" className="ml-2 flex h-10 w-[38px] items-center justify-center">
        <BraveIcon />
      </button>
      <button aria-label="Dateien" className="ml-1.5 flex h-10 w-[38px] items-center justify-center border-b-2 border-[#6b6f75] bg-[#d3d3d6]">
        <BigFolder className="size-[30px]" />
      </button>
      <button aria-label="Terminal" className="ml-1.5 flex h-10 w-[38px] items-center justify-center">
        <TerminalIcon className="size-[30px]" />
      </button>
      <button aria-label="Zeichnung" className="ml-1.5 flex h-10 w-[38px] items-center justify-center border-b-2 border-[#6b6f75]">
        <RainbowTile className="size-[30px] rounded-[6px]">
          <svg viewBox="0 0 28 28" fill="#fff">
            <path d="M24 4.500c1 1 .5 1.800 0 2.500L16 18l-4-3.500L21.500 5c1-1 1.800-1.200 2.500-.5z" />
            <path d="M11 15.500l4 3.500c0 3.500-3.500 6-10 5 2.500-1.500 2-7 6-8.500z" />
          </svg>
        </RainbowTile>
      </button>
      <div className="ml-auto flex items-center gap-3 pr-1.5">
        <svg viewBox="0 0 16 16" className="size-4">
          <path d="M8 .8c2 1.200 4.500 1.700 7 1.700 0 6-2 10.500-7 12.700C3 13 1 8.500 1 2.500c2.500 0 5-.5 7-1.700z" fill="none" stroke="#333" strokeWidth="1.500" />
          <path d="M8 3.500c1.400.8 3 1 4.500 1-.2 4-1.500 6.500-4.500 8-3-1.500-4.300-4-4.500-8 1.500 0 3.100-.2 4.500-1z" fill="#333" />
        </svg>
        <svg viewBox="0 0 16 16" className="ml-0.5 size-4" fill="none" stroke="#aaacac" strokeWidth="2">
          <path d="M3 4.500h10M10 1l3.500 3.500L10 8M9 11H2M5.500 7.500L2 11l3.500 3.500" />
          <path d="M10.500 10l5 5M15.500 10l-5 5" stroke="#333" />
        </svg>
        <svg viewBox="0 0 16 16" className="size-4" fill="#333">
          <path d="M0 5h3l4-4v14l-4-4H0z" />
          <path d="M9 4.500a5 5 0 0 1 0 7" fill="none" stroke="#333" strokeWidth="2" />
          <path d="M12.500 2a8 8 0 0 1 0 12" fill="none" stroke="#aaacac" strokeWidth="1.800" />
        </svg>
        <time className="text-[13px] font-bold text-[#2e2e2e]">20:03</time>
      </div>
    </footer>
  );
}

export default function App() {
  return (
    <div className="flex h-screen flex-col overflow-hidden bg-[#bebfba] font-['Noto_Sans','Open_Sans',sans-serif]">
      <main className="relative flex-1">
        <ThemesWindow />
        <FileManager />
        <StartMenu />
        <Pointer className="absolute bottom-[161px] left-[136px] h-[21px] w-[13px]" />
      </main>
      <Taskbar />
    </div>
  );
}
